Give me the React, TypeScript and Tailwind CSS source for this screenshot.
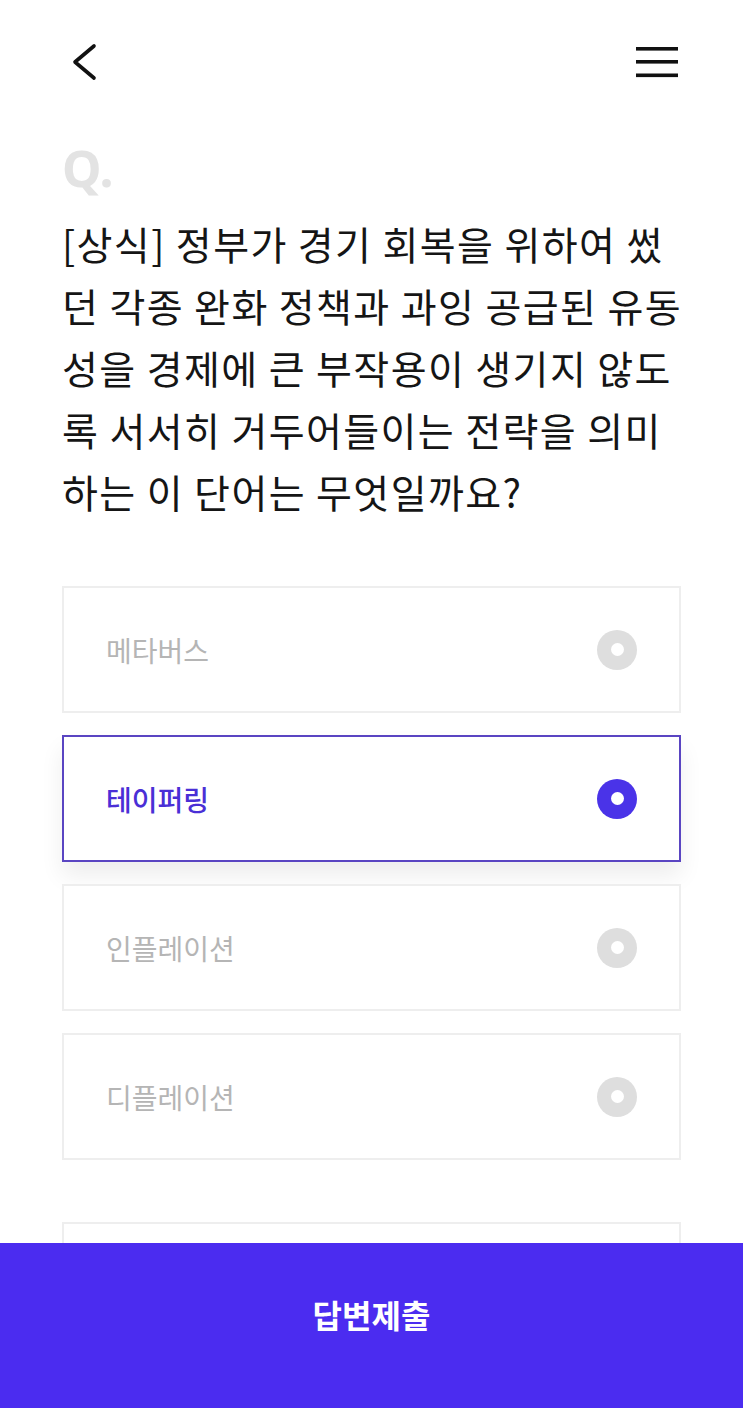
const lines = [
  "[상식] 정부가 경기 회복을 위하여 썼",
  "던 각종 완화 정책과 과잉 공급된 유동",
  "성을 경제에 큰 부작용이 생기지 않도",
  "록 서서히 거두어들이는 전략을 의미",
  "하는 이 단어는 무엇일까요?",
];

const options = [
  { label: "메타버스", selected: false },
  { label: "테이퍼링", selected: true },
  { label: "인플레이션", selected: false },
  { label: "디플레이션", selected: false },
];

function Radio({ on }: { on: boolean }) {
  return (
    <div
      className={`flex h-[40px] w-[40px] items-center justify-center rounded-full ${
        on ? "bg-[#4a33e8]" : "bg-[#dedede]"
      }`}
    >
      <div className="h-[13px] w-[13px] rounded-full bg-white" />
    </div>
  );
}

export default function App() {
  return (
    <div
      className="relative h-[1408px] w-full overflow-hidden bg-white"
      style={{ fontFamily: '"Noto Sans CJK KR", "Noto Sans", sans-serif' }}
    >
      <header className="flex h-[124px] items-center justify-between px-[62px]">
        <svg width="40" height="40" viewBox="0 0 40 40" className="-ml-[2px]">
          <polyline
            points="34,4 15,20 34,36"
            fill="none"
            stroke="#111"
            strokeWidth="3.6"
            strokeLinecap="round"
            strokeLinejoin="round"
          />
        </svg>
        <svg width="42" height="32" viewBox="0 0 42 32" className="mr-[3px]">
          <rect x="0" y="1" width="42" height="3.6" fill="#111" />
          <rect x="0" y="14" width="42" height="3.6" fill="#111" />
          <rect x="0" y="27.5" width="42" height="3.6" fill="#111" />
        </svg>
      </header>

      <main className="px-[62px]">
        <div
          className="mt-[19px] text-[50px] font-bold leading-[50px] text-[#e3e3e3]"
          style={{ fontFamily: '"Noto Sans", sans-serif' }}
        >
          Q.
        </div>

        <div className="mt-[19px] text-[39px] leading-[62px] tracking-[1.4px] text-[#151515]">
          {lines.map((l) => (
            <div key={l} className="whitespace-nowrap">
              {l}
            </div>
          ))}
        </div>

        <div className="mt-[64px] flex flex-col gap-[22px]">
          {options.map((o) => (
            <div
              key={o.label}
              className={`flex h-[127px] items-center justify-between bg-white pl-[42px] pr-[42px] ${
                o.selected
                  ? "border-2 border-[#5a45c2] shadow-[0_14px_22px_rgba(0,0,0,0.07)]"
                  : "border-2 border-[#eeeeee]"
              }`}
            >
              <span
                className={`text-[28px] ${
                  o.selected ? "font-medium text-[#4a2fd6]" : "text-[#b5b5b5]"
                }`}
              >
                {o.label}
              </span>
              <Radio on={o.selected} />
            </div>
          ))}
          <div className="mt-[40px] h-[127px] border-2 border-[#eeeeee] bg-white" />
        </div>
      </main>

      <button className="absolute inset-x-0 bottom-0 flex h-[165px] items-center justify-center bg-[#4b2cf0] pb-[24px] text-[32px] font-bold text-white">
        답변제출
      </button>
    </div>
  );
}
